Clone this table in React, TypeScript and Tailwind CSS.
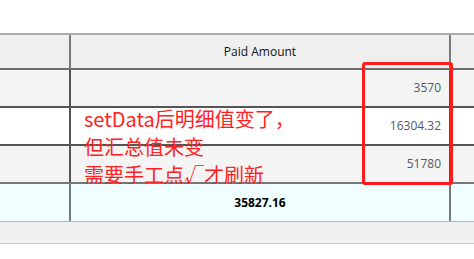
const rows = [
  { amount: '3570', bg: 'bg-[#f4f4f4]' },
  { amount: '16304.32', bg: 'bg-white' },
  { amount: '51780', bg: 'bg-[#f4f4f4]' },
];

export default function App() {
  return (
    <div className="w-[474px] h-[259px] bg-white overflow-hidden relative font-['Open_Sans',sans-serif] text-[12px]">
      <div className="pt-[33px]">
        <div className="border-t-2 border-[#ababab]">
          {/* header */}
          <div className="flex h-[35px] bg-[#efefef] border-b-2 border-[#6e6e6e]">
            <div className="w-[71px] border-r-2 border-[#7a7a7a]" />
            <div className="w-[380px] border-r-2 border-[#7a7a7a] flex items-center justify-center text-[#111]">
              Paid Amount
            </div>
            <div className="flex-1" />
          </div>

          {rows.map((r, i) => (
            <div
              key={r.amount}
              className={`flex h-[38px] border-b-2 ${r.bg} ${i === rows.length - 1 ? 'border-[#777]' : 'border-[#555]'}`}
            >
              <div className="w-[71px] border-r-2 border-[#555]" />
              <div className="w-[380px] border-r-2 border-[#555] flex items-center justify-end pr-[8px] text-[#55585e]">
                {r.amount}
              </div>
              <div className="flex-1" />
            </div>
          ))}

          {/* totals */}
          <div className="relative z-10 flex h-[38px] bg-[#f0ffff] border-b border-[#b5b5b5]">
            <div className="w-[71px] border-r-2 border-[#777]" />
            <div className="w-[380px] border-r-2 border-[#777] flex items-center justify-center font-bold text-black">
              35827.16
            </div>
            <div className="flex-1" />
          </div>

          <div className="h-[22px] bg-[#f0f0f0] border-b border-[#cfcfcf]" />
        </div>
      </div>

      {/* note */}
      <div className="absolute left-[84px] top-[105px] text-[20px] leading-[28px] text-[#ff2222] font-['Noto_Sans_CJK_SC',sans-serif]">
        <div>setData后明细值变了，</div>
        <div>但汇总值未变</div>
        <div>需要手工点√才刷新</div>
      </div>

      <div className="absolute left-[362px] top-[62px] w-[91px] h-[123px] border-[3px] border-[#ff1c1c] rounded-[3px] z-20" />
    </div>
  );
}
